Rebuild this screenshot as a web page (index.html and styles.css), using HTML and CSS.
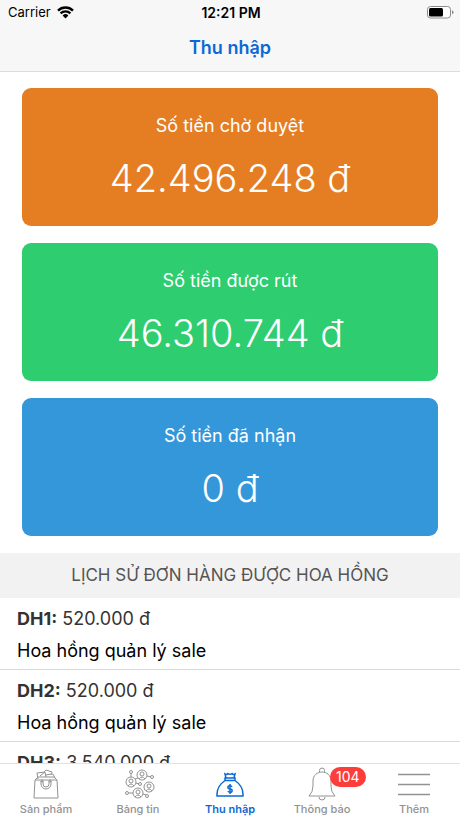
FILE: index.html
```
<!DOCTYPE html>
<html lang="vi">

<head>
    <meta charset="UTF-8">
    <meta name="viewport" content="width=device-width, initial-scale=1.0">
    <title>Thu nhập</title>
    <link rel="stylesheet" href="styles.css">
</head>

<body>
    <header class="header">
        <div class="statusbar">
            <div class="carrier">
                <span>Carrier</span>
                <svg class="wifi" viewBox="0 0 17 13" aria-hidden="true">
                    <path d="M1 4.6a10.6 10.6 0 0 1 15 0M3.6 7.4a7 7 0 0 1 9.8 0" fill="none" stroke="#000" stroke-width="2.3" />
                    <path d="M5.6 9.4a4.1 4.1 0 0 1 5.8 0L8.5 12.4z" fill="#000" />
                </svg>
            </div>
            <time class="clock">12:21 PM</time>
            <svg class="battery" viewBox="0 0 27 13" aria-hidden="true">
                <rect x=".5" y=".5" width="23" height="11.5" rx="3" fill="#fff" stroke="#8a8a8a" />
                <rect x="2" y="2" width="14" height="8.5" rx="1.5" fill="#000" />
                <path d="M25 4.2q1.500.6 1.500 2t-1.500 2z" fill="#8a8a8a" />
            </svg>
        </div>
        <h1>Thu nhập</h1>
    </header>

    <main class="maincontent">
        <section class="cards">
            <div class="card pending">
                <h2>Số tiền chờ duyệt</h2>
                <p>42.496.248 đ</p>
            </div>
            <div class="card available">
                <h2>Số tiền được rút</h2>
                <p>46.310.744 đ</p>
            </div>
            <div class="card received">
                <h2>Số tiền đã nhận</h2>
                <p>0 đ</p>
            </div>
        </section>

        <h2 class="history-title">LỊCH SỬ ĐƠN HÀNG ĐƯỢC HOA HỒNG</h2>
        <ul class="history">
            <li>
                <p class="amount"><strong>DH1:</strong> 520.000 đ</p>
                <p>Hoa hồng quản lý sale</p>
            </li>
            <li>
                <p class="amount"><strong>DH2:</strong> 520.000 đ</p>
                <p>Hoa hồng quản lý sale</p>
            </li>
            <li>
                <p class="amount"><strong>DH3:</strong> 3.540.000 đ</p>
            </li>
        </ul>
    </main>

    <nav class="tabbar">
        <a href="#products">
            <svg viewBox="0 0 36 36" aria-hidden="true">
                <path d="M7 13h22l1 18H6zM7 13l3-3h16l3 3M10 12l-1-6 8-1 1 5M12 9l5-4M16 5l2-2 6 2-1 2M17 8l8-1 2 4" />
                <path d="M13 14v3a5 5 0 0 0 10 0v-3M15 14v3a3 3 0 0 0 6 0v-3" />
                <circle cx="14" cy="14" r="1" />
                <circle cx="22" cy="14" r="1" />
            </svg>
            <span>Sản phẩm</span>
        </a>
        <a href="#news">
            <svg viewBox="0 0 36 36" aria-hidden="true">
                <circle cx="11" cy="15" r="5" />
                <circle cx="22" cy="8" r="5" />
                <circle cx="29" cy="20" r="5" />
                <circle cx="18" cy="26" r="5" />
                <circle cx="11" cy="14" r="2" />
                <circle cx="22" cy="7" r="2" />
                <circle cx="29" cy="19" r="2" />
                <circle cx="18" cy="25" r="2" />
                <path d="M8 19q3-4 6 0M19 12q3-4 6 0M26 24q3-4 6 0M15 30q3-4 6 0" />
                <path d="M11 10V6.500M16 16l3 1M27 9l4 1M13 26H9M23 27l3 1M15 12l3-1M24 23l1-1" />
                <circle cx="11" cy="5" r="1.5" />
                <circle cx="20" cy="17" r="1.5" />
                <circle cx="32" cy="10" r="1.5" />
                <circle cx="7" cy="26" r="1.5" />
                <circle cx="27" cy="29" r="1.5" />
            </svg>
            <span>Bảng tin</span>
        </a>
        <a href="#income" class="active" aria-current="page">
            <svg viewBox="0 0 36 36" aria-hidden="true">
                <path d="M14 11 13 7q2 1 3-.5 2 1.500 4 0Q21 8 23 7l-1 4M13 11h10v2.500H13zM13 13.500C8 17 5 21 5 27v2h26v-2c0-6-3-10-8-13.500" />
                <path d="M20 20q-.6-1.300-2-1.300c-2.800 0-2.800 3.300 0 3.300s2.800 3.300 0 3.300q-1.400 0-2-1.300M18 17v10" />
            </svg>
            <span>Thu nhập</span>
        </a>
        <a href="#notifications">
            <svg viewBox="0 0 36 36" aria-hidden="true">
                <path d="M15.500 5V3.500a2.500 2.500 0 0 1 5 0V5M5 29h26q-4-4-4-10v-5c0-12-18-12-18 0v5q0 6-4 10zM15 30a3 3 0 0 0 6 0" />
            </svg>
            <b class="badge">104</b>
            <span>Thông báo</span>
        </a>
        <a href="#more">
            <svg viewBox="0 0 36 36" aria-hidden="true">
                <path d="M2 7.500h32M2 17.500h32M2 27.500h32" stroke-width="1.5" />
            </svg>
            <span>Thêm</span>
        </a>
    </nav>
</body>

</html>
```
FILE: styles.css
```
* {
    box-sizing: border-box;
    margin: 0;
    padding: 0;
}

body {
    display: flex;
    flex-direction: column;
    height: 100vh;
    background: #fff;
    color: #000;
    font-family: Inter, "Noto Sans", sans-serif;
}

.header {
    border-bottom: 1px solid #dcdcdc;
    background: #f7f7f7;
}

.statusbar {
    display: grid;
    grid-template-columns: 1fr auto 1fr;
    align-items: center;
    height: 24px;
    padding: 0 6px 0 8px;
    font-size: 13px;
}

.carrier {
    display: flex;
    align-items: center;
    gap: 6px;
}

.wifi {
    width: 17px;
    height: 13px;
}

.clock {
    font-size: 14px;
    font-weight: 600;
}

.battery {
    justify-self: end;
    width: 27px;
    height: 13px;
}

.header h1 {
    color: #0c69d4;
    font-size: 18px;
    font-weight: 600;
    line-height: 47px;
    text-align: center;
}

.maincontent {
    flex: 1;
    min-height: 0;
    overflow: hidden;
}

.cards {
    display: flex;
    flex-direction: column;
    gap: 17px;
    padding: 16px 22px 17px;
}

.card {
    padding: 24px 0 22px;
    border-radius: 9px;
    color: #fff;
    text-align: center;
}

.card h2 {
    font-size: 18px;
    font-weight: 400;
    line-height: 28px;
}

.card p {
    padding-top: 12px;
    font-size: 38px;
    font-weight: 300;
    line-height: 52px;
}

.pending {
    background: #e57e22;
}

.available {
    background: #2ecd70;
}

.received {
    background: #3497da;
}

.history-title {
    background: #f2f2f2;
    color: #555;
    font-size: 17px;
    font-weight: 400;
    line-height: 45px;
    text-align: center;
}

.history {
    list-style: none;
}

.history li {
    padding: 5px 17px 2px;
    border-bottom: 1px solid #dcdcdc;
    font-size: 18px;
    line-height: 32px;
}

.amount {
    color: #333;
}

.amount strong {
    font-weight: 700;
}

.tabbar {
    display: grid;
    grid-template-columns: repeat(5, 1fr);
    height: 55px;
    border-top: 1px solid #e2e2e2;
    background: #fff;
}

.tabbar a {
    display: flex;
    position: relative;
    flex-direction: column;
    align-items: center;
    padding-top: 3px;
    color: #929292;
    font-size: 11px;
    font-weight: 500;
    line-height: 13px;
    text-decoration: none;
}

.tabbar svg {
    width: 36px;
    height: 36px;
    fill: none;
    stroke: currentColor;
    stroke-width: 1;
}

.tabbar .active {
    color: #0c69d4;
    font-weight: 600;
}

.active svg {
    stroke-width: 1.5;
}

.badge {
    position: absolute;
    top: 3px;
    left: 50%;
    margin-left: 8px;
    padding: 0 6px;
    border-radius: 10px;
    background: #fc3d39;
    color: #fff;
    font-size: 14px;
    font-weight: 400;
    line-height: 20px;
}
```
